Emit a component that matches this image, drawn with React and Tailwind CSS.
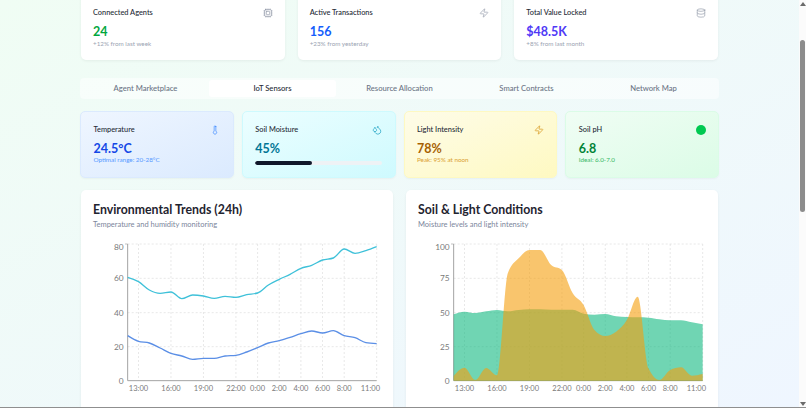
import React from 'react';
import { Cpu, Zap, Database, Thermometer, Droplets } from 'lucide-react';

const font = { fontFamily: 'Lato, "Noto Sans", sans-serif' };

const stats = [
  { label: 'Connected Agents', value: '24', sub: '+12% from last week', color: 'text-green-600', Icon: Cpu },
  { label: 'Active Transactions', value: '156', sub: '+23% from yesterday', color: 'text-blue-600', Icon: Zap },
  { label: 'Total Value Locked', value: '$48.5K', sub: '+8% from last month', color: 'text-indigo-600', Icon: Database },
];

const tabs = ['Agent Marketplace', 'IoT Sensors', 'Resource Allocation', 'Smart Contracts', 'Network Map'];

const hours = ['13:00', '16:00', '19:00', '22:00', '0:00', '2:00', '4:00', '6:00', '8:00', '11:00'];
const hourIdx = [1, 4, 7, 10, 12, 14, 16, 18, 20, 23];

// chart values are kept in reference pixels x3, the svg viewBox maps them back
const humidity = [262, 275, 300, 310, 306, 326, 315, 318, 325, 319, 322, 314, 309, 285, 268, 253, 235, 226, 210, 204, 177, 190, 182, 170];
const temperature = [437, 454, 459, 474, 490, 498, 508, 505, 505, 498, 496, 486, 473, 459, 452, 442, 431, 423, 429, 422, 437, 443, 458, 461];
const moisture = [373, 365, 369, 364, 360, 364, 360, 358, 358, 359, 359, 359, 371, 374, 372, 379, 381, 382, 383, 388, 391, 391, 397, 403];
const light = [558, 533, 570, 534, 556, 250, 205, 180, 180, 225, 240, 310, 345, 420, 438, 425, 390, 320, 535, 570, 540, 532, 557, 552];

// monotone curve, no overshoot past the data points
const smooth = (ys, left, right) => {
  const h = (right - left) / (ys.length - 1);
  const slopes = ys.slice(1).map((y, i) => (y - ys[i]) / h);
  const t = ys.map((_, i) => {
    if (i === 0 || i === ys.length - 1) return 0;
    const a = slopes[i - 1];
    const b = slopes[i];
    return (Math.sign(a) + Math.sign(b)) * Math.min(Math.abs(a), Math.abs(b), 0.25 * Math.abs(a + b));
  });
  t[0] = (3 * slopes[0] - t[1]) / 2;
  t[ys.length - 1] = (3 * slopes[slopes.length - 1] - t[ys.length - 2]) / 2;
  let d = `M${left},${ys[0]}`;
  for (let i = 0; i < ys.length - 1; i++) {
    const x = left + i * h;
    d += ` C${x + h / 3},${ys[i] + (h / 3) * t[i]} ${x + (2 * h) / 3},${ys[i + 1] - (h / 3) * t[i + 1]} ${x + h},${ys[i + 1]}`;
  }
  return d;
};

const Axes = ({ left, right, yLabels }) => {
  const step = (right - left) / 23;
  const rows = [162, 265, 368, 470, 572];
  return (
    <g fill="#7a7a7a" style={font}>
      {rows.slice(0, 4).map(y => (
        <line key={y} x1={left} x2={right} y1={y} y2={y} stroke="#dcdcdc" strokeWidth="2" strokeDasharray="6 6" />
      ))}
      {hourIdx.map(i => (
        <line key={i} x1={left + i * step} x2={left + i * step} y1={162} y2={572} stroke="#dcdcdc" strokeWidth="2" strokeDasharray="6 6" />
      ))}
      <line x1={left} x2={left} y1={162} y2={572} stroke="#a3a3a3" strokeWidth="3" />
      <line x1={left - 8} x2={left} y1={162} y2={162} stroke="#a3a3a3" strokeWidth="2" />
      <line x1={left} x2={right} y1={572} y2={572} stroke="#a3a3a3" strokeWidth="3" />
      {yLabels.map((l, i) => (
        <text key={l} x={left - 12} y={(i === 0 ? 172 : rows[i]) + 9} fontSize="25" textAnchor="end">{l}</text>
      ))}
      {hourIdx.map((h, i) => (
        <text key={h} x={left + h * step} y={602} fontSize="22.5" textAnchor={i === 9 ? 'end' : 'middle'} dx={i === 9 ? 10 : 0}>{hours[i]}</text>
      ))}
    </g>
  );
};

const ChartCard = ({ title, sub, children }) => (
  <div className="rounded-[5px] bg-white shadow-[0_1px_3px_rgba(0,0,0,0.06)] h-[240px]">
    <div className="pt-[11px] pl-[12px] h-[46px]">
      <h3 className="text-[12.3px] leading-[18px] font-bold text-[#1f2430]">{title}</h3>
      <p className="text-[7.5px] leading-[12px] text-[#7c869c]">{sub}</p>
    </div>
    <svg width="312" height="180" viewBox="3 138 936 540" className="block">
      {children}
    </svg>
  </div>
);

const SensorCard = ({ bg, label, value, valueColor, icon, children }) => (
  <div className={`rounded-[5px] border h-[67px] px-[12.5px] pt-[11px] shadow-[0_1px_2px_rgba(0,0,0,0.04)] ${bg}`}>
    <div className="flex items-center justify-between h-[14px]">
      <span className="text-[7.4px] font-medium text-[#262b36]">{label}</span>
      {icon}
    </div>
    <div className={`text-[12.5px] leading-[16px] mt-[4px] font-bold ${valueColor}`}>{value}</div>
    {children}
  </div>
);

export default function App() {
  return (
    <div className="flex h-screen overflow-hidden border-b border-[#8f8f8f] bg-white" style={font}>
      <main className="w-[799px] shrink-0 overflow-hidden bg-gradient-to-br from-[#f0fdf4] to-[#eff6ff]">
        <div className="px-[80px] -mt-[8px]">
          {/* STATS */}
          <section className="grid grid-cols-3 gap-[13px] px-[1px]">
            {stats.map(({ label, value, sub, color, Icon }) => (
              <div key={label} className="h-[68px] rounded-[5px] bg-white px-[12px] pt-[14px] shadow-[0_1px_3px_rgba(0,0,0,0.06)]">
                <div className="flex items-center justify-between h-[14px]">
                  <span className="text-[7.4px] font-medium text-[#262b36]">{label}</span>
                  <Icon size={10} strokeWidth={1.5} className="text-[#8b93a3]" />
                </div>
                <div className={`text-[12.5px] leading-[16px] mt-[4px] font-bold ${color}`}>{value}</div>
                <div className="text-[6.3px] leading-[8px] text-[#9aa3b2]">{sub}</div>
              </div>
            ))}
          </section>

          {/* TABS */}
          <nav className="grid grid-cols-5 mt-[18px] h-[21px] rounded-[4px] bg-white/50 p-[2px]">
            {tabs.map(t => (
              <div
                key={t}
                className={`flex items-center justify-center rounded-[3px] text-[7.65px] font-medium ${t === 'IoT Sensors' ? 'bg-white text-[#262b36]' : 'text-[#6b7485]'}`}
              >
                {t}
              </div>
            ))}
          </nav>

          {/* SENSORS */}
          <section className="grid grid-cols-4 gap-[8px] mt-[12px]">
            <SensorCard
              bg="bg-gradient-to-br from-blue-50 to-blue-100 border-blue-100"
              label="Temperature"
              value="24.5°C"
              valueColor="text-blue-700"
              icon={<Thermometer size={10} strokeWidth={1.5} className="text-blue-500" />}
            >
              <div className="text-[6.3px] leading-[8px] -mt-[1px] text-blue-500/80">Optimal range: 20-28°C</div>
            </SensorCard>
            <SensorCard
              bg="bg-gradient-to-br from-cyan-50 to-cyan-100 border-cyan-100"
              label="Soil Moisture"
              value="45%"
              valueColor="text-cyan-700"
              icon={<Droplets size={10} strokeWidth={1.5} className="text-cyan-600" />}
            >
              <div className="mt-[4px] h-[4px] rounded-full bg-[#eef2f5] overflow-hidden">
                <div className="h-full w-[45%] rounded-full bg-[#0f172a]" />
              </div>
            </SensorCard>
            <SensorCard
              bg="bg-gradient-to-br from-yellow-50 to-yellow-100 border-yellow-100"
              label="Light Intensity"
              value="78%"
              valueColor="text-yellow-700"
              icon={<Zap size={10} strokeWidth={1.5} className="text-yellow-600" />}
            >
              <div className="text-[6.3px] leading-[8px] -mt-[1px] text-yellow-600/80">Peak: 95% at noon</div>
            </SensorCard>
            <SensorCard
              bg="bg-gradient-to-br from-green-50 to-green-100 border-green-100"
              label="Soil pH"
              value="6.8"
              valueColor="text-green-700"
              icon={<span className="w-[10px] h-[10px] rounded-full bg-green-500" />}
            >
              <div className="text-[6.3px] leading-[8px] -mt-[1px] text-green-600/80">Ideal: 6.0-7.0</div>
            </SensorCard>
          </section>

          {/* CHARTS */}
          <section className="grid grid-cols-2 gap-[13px] mt-[12px] px-[1px]">
            <ChartCard title="Environmental Trends (24h)" sub="Temperature and humidity monitoring">
              <Axes left={143} right={890} yLabels={['80', '60', '40', '20', '0']} />
              <path d={smooth(humidity, 143, 890)} fill="none" stroke="#3fc1d9" strokeWidth="4" />
              <path d={smooth(temperature, 143, 890)} fill="none" stroke="#5b8fe6" strokeWidth="4" />
            </ChartCard>
            <ChartCard title="Soil & Light Conditions" sub="Moisture levels and light intensity">
              <Axes left={146} right={893} yLabels={['100', '75', '50', '25', '0']} />
              <path d={`${smooth(moisture, 146, 893)} L893,572 L146,572 Z`} fill="#10b981" fillOpacity="0.6" />
              <path d={`${smooth(light, 146, 893)} L893,572 L146,572 Z`} fill="#f59e0b" fillOpacity="0.6" />
            </ChartCard>
          </section>
        </div>
      </main>

      {/* SCROLLBAR */}
      <aside className="relative flex-1 bg-[#fbfbfb]">
        <span className="absolute left-[1px] top-[2px] w-0 h-0 border-x-[3px] border-x-transparent border-b-[4px] border-b-[#6b6b6b]" />
        <div className="absolute left-[1px] top-[40px] h-[172px] w-[5px] rounded-full bg-[#8c8c8c]" />
        <span className="absolute left-[1px] bottom-[1px] w-0 h-0 border-x-[3px] border-x-transparent border-t-[4px] border-t-[#6b6b6b]" />
      </aside>
    </div>
  );
}
